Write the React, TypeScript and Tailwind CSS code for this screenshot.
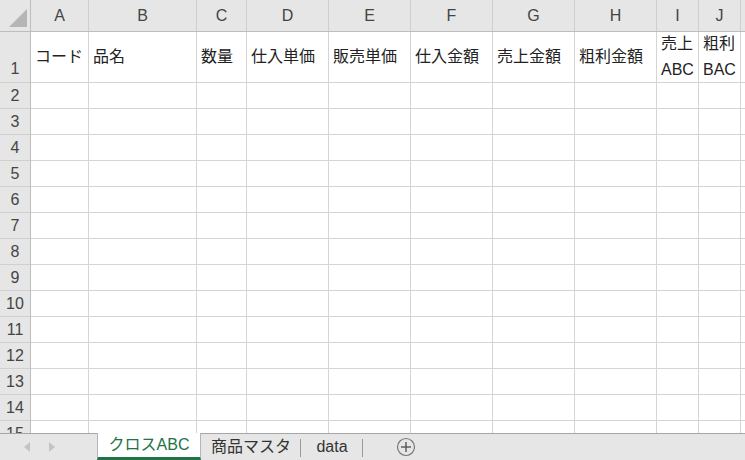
import React from 'react';

const columns = [
  { key: 'A', width: 58 },
  { key: 'B', width: 108 },
  { key: 'C', width: 50 },
  { key: 'D', width: 82 },
  { key: 'E', width: 82 },
  { key: 'F', width: 82 },
  { key: 'G', width: 82 },
  { key: 'H', width: 82 },
  { key: 'I', width: 42 },
  { key: 'J', width: 42 },
  { key: '', width: 40 },
];

const headings: React.ReactNode[] = [
  'コード',
  '品名',
  '数量',
  '仕入単価',
  '販売単価',
  '仕入金額',
  '売上金額',
  '粗利金額',
  <>売上<br />ABC</>,
  <>粗利<br />BAC</>,
  '',
];

const font = { fontFamily: '"Liberation Sans", "Noto Sans CJK JP", sans-serif' };

function CornerCell() {
  return (
    <div className="w-[31px] shrink-0 h-full bg-[#e6e6e6] border-r border-[#bdbdbd] relative">
      <svg className="absolute left-0 top-0" width="31" height="31" viewBox="0 0 31 31">
        <polygon points="9,27 27,27 27,9" fill="#b5b5b5" />
      </svg>
    </div>
  );
}

function RowNumber({ n, bottom }: { n: number; bottom?: boolean }) {
  return (
    <div
      className={`w-[31px] shrink-0 h-full bg-[#e6e6e6] border-r border-b border-r-[#bdbdbd] border-b-[#d0d0d0] flex justify-center text-[16px] text-[#444] ${
        bottom ? 'items-end pb-px' : 'items-center'
      }`}
    >
      {n}
    </div>
  );
}

export default function App() {
  const rows = Array.from({ length: 14 }, (_, i) => i + 2);

  return (
    <div className="w-[745px] h-[460px] bg-white flex flex-col overflow-hidden select-none" style={font}>
      <div className="flex-1 overflow-hidden">
        {/* column letters */}
        <div className="flex h-[32px] border-b border-[#bdbdbd]">
          <CornerCell />
          {columns.map((c, i) => (
            <div
              key={i}
              className="shrink-0 h-full bg-[#e6e6e6] border-r border-[#cfcfcf] flex items-center justify-center text-[16px] text-[#444]"
              style={{ width: c.width }}
            >
              {c.key}
            </div>
          ))}
        </div>

        {/* row 1: headings */}
        <div className="flex h-[51px]">
          <RowNumber n={1} bottom />
          {columns.map((c, i) => (
            <div
              key={i}
              className="shrink-0 h-full border-r border-b border-[#d4d4d4] flex items-center pl-[4px] text-[16px] leading-[26px] text-[#222] whitespace-nowrap overflow-hidden"
              style={{ width: c.width }}
            >
              <span>{headings[i]}</span>
            </div>
          ))}
        </div>

        {rows.map((r) => (
          <div key={r} className="flex h-[26px]">
            <RowNumber n={r} />
            {columns.map((c, i) => (
              <div
                key={i}
                className="shrink-0 h-full border-r border-b border-[#d4d4d4]"
                style={{ width: c.width }}
              />
            ))}
          </div>
        ))}
      </div>

      {/* sheet tabs */}
      <div className="h-[27px] shrink-0 bg-[#e6e6e6] border-t border-[#a6a6a6] flex items-stretch text-[16px]">
        <div className="w-[97px] flex items-center pl-[24px] gap-[19px]">
          <svg width="6" height="10" viewBox="0 0 6 10">
            <polygon points="6,0 6,10 0,5" fill="#c4c4c4" />
          </svg>
          <svg width="6" height="10" viewBox="0 0 6 10">
            <polygon points="0,0 0,10 6,5" fill="#c4c4c4" />
          </svg>
        </div>
        <div className="w-[104px] -mt-px bg-white border-x border-[#b5b5b5] border-b-[3px] border-b-[#217346] flex items-center justify-center text-[#217346]">
          クロスABC
        </div>
        <div className="w-[100px] flex items-center justify-center text-[#333] relative">
          商品マスタ
          <span className="absolute right-0 top-[5px] h-[18px] w-px bg-[#9a9a9a]" />
        </div>
        <div className="w-[62px] flex items-center justify-center text-[#333] relative">
          data
          <span className="absolute right-0 top-[5px] h-[18px] w-px bg-[#9a9a9a]" />
        </div>
        <div className="flex items-center pl-[33px]">
          <svg width="20" height="20" viewBox="0 0 20 20">
            <circle cx="10" cy="10" r="8.5" fill="none" stroke="#777" strokeWidth="1.2" />
            <line x1="10" y1="5" x2="10" y2="15" stroke="#555" strokeWidth="1.4" />
            <line x1="5" y1="10" x2="15" y2="10" stroke="#555" strokeWidth="1.4" />
          </svg>
        </div>
      </div>
    </div>
  );
}
